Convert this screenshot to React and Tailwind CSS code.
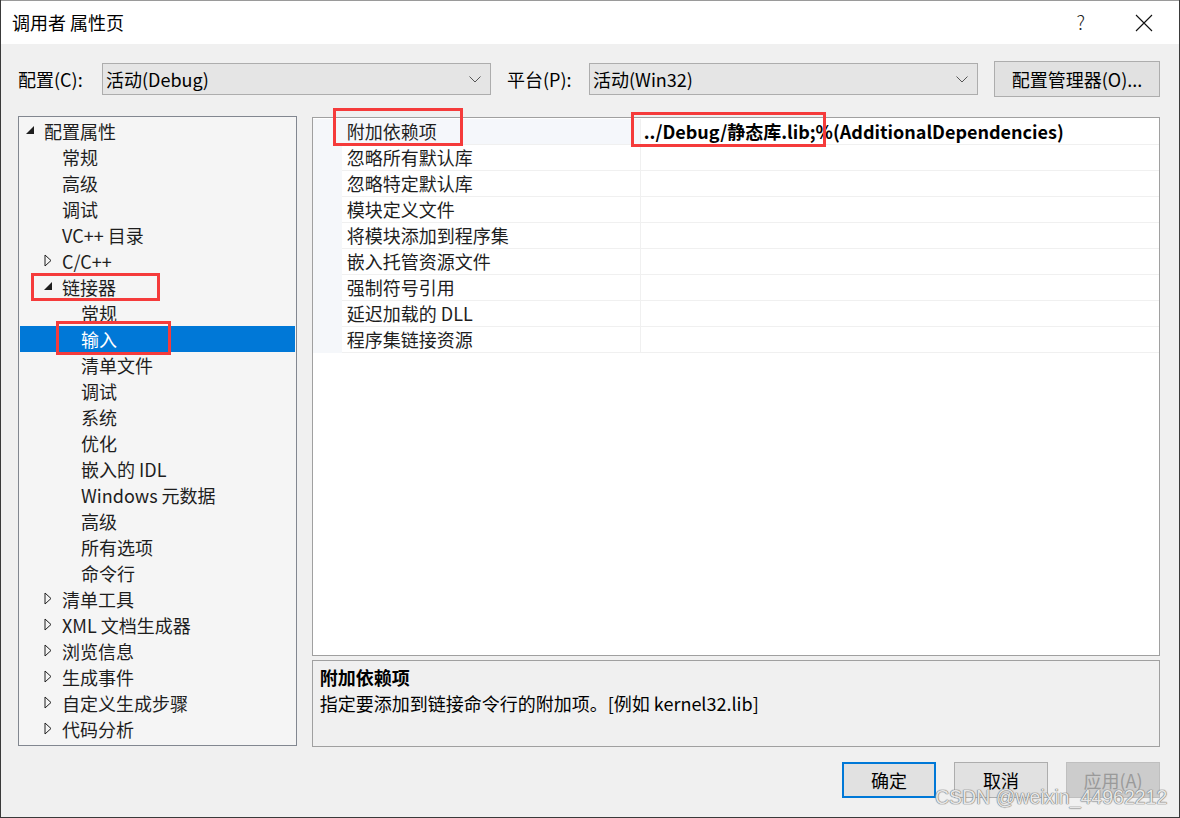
import React from 'react'

const FONT = { fontFamily: '"Noto Sans CJK SC", "Microsoft YaHei", "Liberation Sans", sans-serif' }

// tree rows: [level, label, expander, selected] expander: 'open' | 'closed' | null
const TREE = [
  [0, '配置属性', 'open'],
  [1, '常规', null],
  [1, '高级', null],
  [1, '调试', null],
  [1, 'VC++ 目录', null],
  [1, 'C/C++', 'closed'],
  [1, '链接器', 'open'],
  [2, '常规', null],
  [2, '输入', null, true],
  [2, '清单文件', null],
  [2, '调试', null],
  [2, '系统', null],
  [2, '优化', null],
  [2, '嵌入的 IDL', null],
  [2, 'Windows 元数据', null],
  [2, '高级', null],
  [2, '所有选项', null],
  [2, '命令行', null],
  [1, '清单工具', 'closed'],
  [1, 'XML 文档生成器', 'closed'],
  [1, '浏览信息', 'closed'],
  [1, '生成事件', 'closed'],
  [1, '自定义生成步骤', 'closed'],
  [1, '代码分析', 'closed'],
]

const PROPS = [
  '附加依赖项',
  '忽略所有默认库',
  '忽略特定默认库',
  '模块定义文件',
  '将模块添加到程序集',
  '嵌入托管资源文件',
  '强制符号引用',
  '延迟加载的 DLL',
  '程序集链接资源',
]

function Expander({ kind }) {
  if (kind === 'open')
    return (
      <svg width="9" height="9" viewBox="0 0 9 9" className="shrink-0">
        <polygon points="8,0 8,8 0,8" fill="#1e1e1e" />
      </svg>
    )
  return (
    <svg width="8" height="13" viewBox="0 0 8 13" className="shrink-0">
      <polygon points="1,1 7,6.5 1,12" fill="none" stroke="#1e1e1e" strokeWidth="1" />
    </svg>
  )
}

function Combo({ text }) {
  return (
    <div className="flex items-center h-[32px] w-[389px] bg-[#e5e5e5] border border-[#adadad] pl-[3px] pr-[9px]">
      <span className="flex-1 text-[18px] text-black">{text}</span>
      <svg width="12" height="7" viewBox="0 0 12 7">
        <polyline points="0.5,0.5 6,6 11.5,0.5" fill="none" stroke="#555" strokeWidth="1" />
      </svg>
    </div>
  )
}

function TreeRow({ level, label, expander, selected }) {
  const pad = level === 0 ? 'pl-[6px]' : level === 1 ? 'pl-[24px]' : 'pl-[60px]'
  return (
    <div className={`flex items-center h-[26px] ${pad} ${selected ? 'bg-[#0078d7] text-white' : 'text-[#1e1e1e]'}`}>
      {level < 2 && (
        <span className="w-[17px] h-[26px] flex items-center justify-start pb-[1px]">
          {expander && <Expander kind={expander} />}
        </span>
      )}
      <span className="text-[18px] leading-[26px] pl-[1px]">{label}</span>
    </div>
  )
}

export default function App() {
  return (
    <div style={FONT} className="relative w-[1180px] h-[818px] flex flex-col border-l border-r border-b border-[#3a3a3a] overflow-hidden select-none">
      {/* title bar */}
      <div className="h-[44px] bg-white flex items-center shrink-0 border-t border-[#9a9a9a]">
        <span className="pl-[11px] text-[18px] text-black flex-1">调用者 属性页</span>
        <span className="text-[19px] text-[#222] mr-[50px] font-light">?</span>
        <svg width="18" height="18" viewBox="0 0 18 18" className="mr-[26px]">
          <path d="M1 1 L17 17 M17 1 L1 17" stroke="#111" strokeWidth="1.1" />
        </svg>
      </div>

      {/* body */}
      <div className="flex-1 bg-[#f0f0f0] flex flex-col pl-[17px] pr-[19px]">
        {/* configuration row */}
        <div className="flex items-center h-[36px] mt-[17px]">
          <span className="w-[84px] text-[18px] text-black">配置(C):</span>
          <Combo text="活动(Debug)" />
          <span className="ml-[16px] w-[82px] text-[18px] text-black">平台(P):</span>
          <Combo text="活动(Win32)" />
          <button className="ml-[16px] w-[166px] h-[36px] bg-[#e1e1e1] border border-[#adadad] text-[18px] text-black">
            配置管理器(O)...
          </button>
        </div>

        {/* main area */}
        <div className="flex mt-[19px] gap-[15px]">
          {/* tree */}
          <div className="w-[279px] h-[630px] border border-[#828790] bg-[#f5f5f5] p-[1px]">
            {TREE.map(([lv, label, ex, sel], i) => (
              <TreeRow key={i} level={lv} label={label} expander={ex} selected={sel} />
            ))}
          </div>

          {/* right column */}
          <div className="w-[849px] flex flex-col">
            <div className="h-[539px] mt-[1px] border border-[#a0a0a0] bg-white pt-[1px]">
              {PROPS.map((p, i) => (
                <div key={i} className="flex h-[26px]">
                  <div className="w-[29px] bg-[#f5f7fa]" />
                  <div
                    className={`w-[299px] border-b border-r border-[#f0f0f0] pl-[5px] text-[18px] leading-[25px] text-[#1e1e1e] ${i === 0 ? 'bg-[#f5f7fb]' : 'bg-white'}`}
                  >
                    {p}
                  </div>
                  <div className="flex-1 border-b border-[#f0f0f0] pl-[3px] text-[18px] leading-[25px] text-black font-bold">
                    {i === 0 ? '../Debug/静态库.lib;%(AdditionalDependencies)' : ''}
                  </div>
                </div>
              ))}
            </div>

            <div className="h-[87px] mt-[4px] border border-[#a0a0a0] bg-[#f0f0f0] px-[7px] pt-[3px]">
              <div className="text-[18px] leading-[26px] font-bold text-black">附加依赖项</div>
              <div className="text-[18px] leading-[26px] text-black">指定要添加到链接命令行的附加项。[例如 kernel32.lib]</div>
            </div>
          </div>
        </div>

        {/* dialog buttons */}
        <div className="flex justify-end gap-[18px] mt-[15px]">
          <button className="w-[94px] h-[36px] bg-[#e1e1e1] border-2 border-[#0078d7] text-[18px] text-black">确定</button>
          <button className="w-[94px] h-[36px] bg-[#e1e1e1] border border-[#adadad] text-[18px] text-black">取消</button>
          <button className="w-[94px] h-[36px] bg-[#cccccc] border border-[#bfbfbf] text-[18px] text-[#9a9a9a]">应用(A)</button>
        </div>
      </div>

      {/* red annotation boxes */}
      <div className="absolute left-[332px] top-[108px] w-[130px] h-[38px] border-[3px] border-[#f53b3b]" />
      <div className="absolute left-[630px] top-[112px] w-[195px] h-[35px] border-[3px] border-[#f53b3b]" />
      <div className="absolute left-[30px] top-[273px] w-[129px] h-[28px] border-[3px] border-[#f53b3b]" />
      <div className="absolute left-[55px] top-[321px] w-[115px] h-[34px] border-[3px] border-[#f53b3b]" />

      {/* watermark */}
      <div
        className="absolute left-[934px] top-[785px] text-[19.5px] leading-[24px] text-[#e6e6e6]"
        style={{ fontFamily: '"Liberation Sans", sans-serif', textShadow: '0 0 1px #777, 0 0 1px #777, 0 0 1px #777' }}
      >
        CSDN @weixin_44962212
      </div>
    </div>
  )
}
